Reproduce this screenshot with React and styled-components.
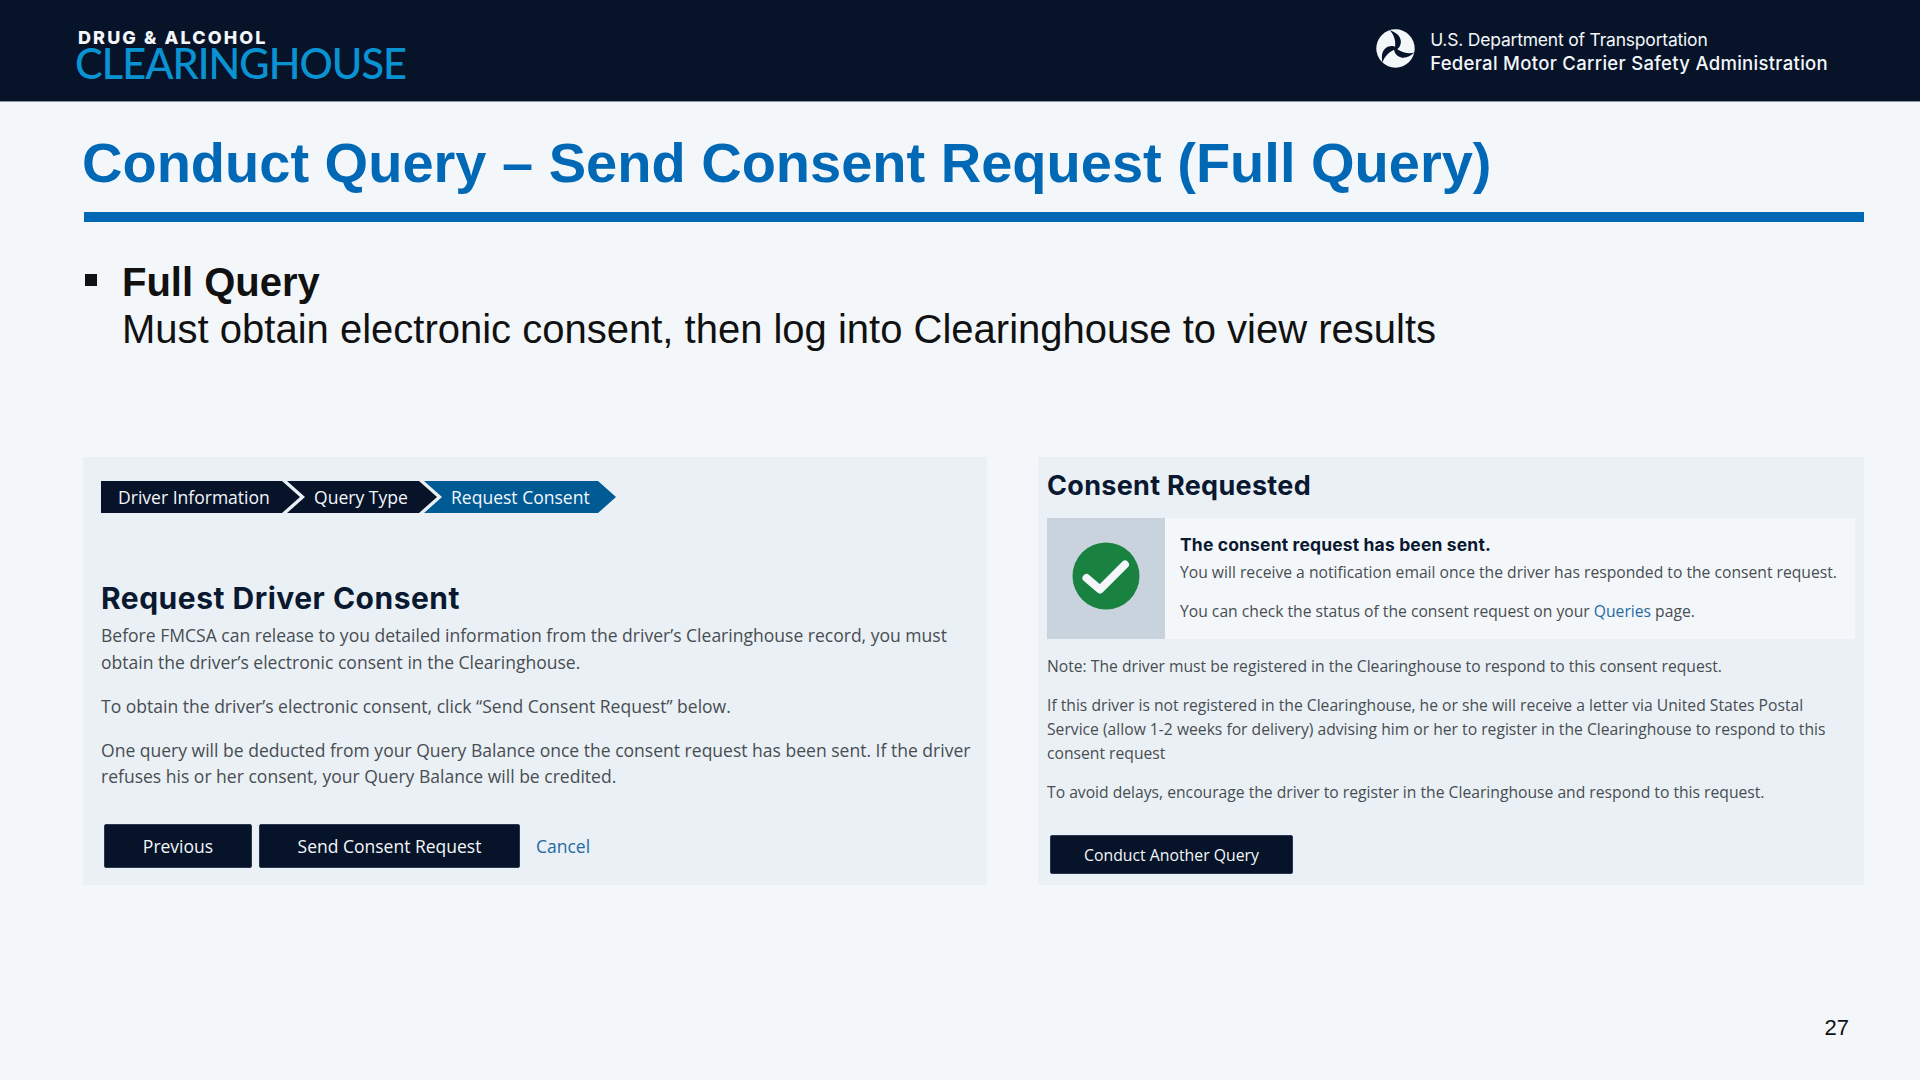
import React from "react";
import styled, { createGlobalStyle } from "styled-components";

const Global = createGlobalStyle`
  html, body { margin: 0; padding: 0; background: #f3f7fa; }
  * { box-sizing: border-box; }
`;
const Slide = styled.div`
  width: 1920px; height: 1080px; display: flex; flex-direction: column;
  background: #f3f7fa; font-family: "Liberation Sans", Arial, sans-serif; overflow: hidden;
`;
const Header = styled.header`
  height: 102px; flex: none; background: #071329; display: flex; align-items: center;
  justify-content: space-between; padding: 0 92px 0 76px; border-bottom: 1px solid #8a92a0;
`;
const Logo = styled.div`display: flex; flex-direction: column; align-items: flex-start; padding-top: 8px;`;
const LogoTop = styled.div`
  font: 800 18px/18px Inter, sans-serif; letter-spacing: 2.1px; color: #f3f7fa; margin-left: 2px;
`;
const LogoMain = styled.div`
  font: 500 41.5px/33px Lato, sans-serif; letter-spacing: -0.95px; color: #0a93d3; margin-left: -1px;
`;
const Agency = styled.div`display: flex; align-items: center; gap: 15px;`;
const DotSvg = styled.svg`flex: none; margin-bottom: 4px;`;
const AgencyText = styled.div`display: flex; flex-direction: column; gap: 3px; padding-top: 2px; color: #f3f7fa; font-family: Inter, sans-serif;`;
const AgencyLine = styled.div`
  font-size: ${p => (p.$strong ? 18.5 : 17.5)}px; line-height: 21px; font-weight: ${p => (p.$strong ? 500 : 400)};
  letter-spacing: ${p => (p.$strong ? "0.3px" : "-0.2px")}; white-space: nowrap;
`;
const Content = styled.main`flex: 1; display: flex; flex-direction: column; padding: 0 56px 0 82px;`;
const Title = styled.h1`
  margin: 0 0 0 2px; height: 120px; padding-top: 28px; font-size: 56px; line-height: 66px; font-weight: 700; color: #0068b5;
  border-bottom: 10px solid #0068b5; text-indent: -2px; white-space: nowrap;
`;
const Bullet = styled.div`
  display: flex; margin-top: 37px; padding-left: 3px; color: #111; font-size: 40px; line-height: 47px;
`;
const Square = styled.span`width: 12px; height: 12px; background: #111; margin: 15px 25px 0 0; flex: none;`;
const BulletBody = styled.div`display: flex; flex-direction: column;`;
const Strong = styled.div`font-weight: 700;`;
const Panels = styled.div`display: grid; grid-template-columns: 904px 826px; gap: 51px; margin: 104px 0 0 1px;`;
const Panel = styled.section`
  height: 428px; background: repeating-conic-gradient(#e6eef3 0 25%, #eef3f7 0 50%) 0 0 / 2px 2px;
  display: flex; flex-direction: column;
  padding: ${p => p.$pad}; font-family: "Open Sans", sans-serif; color: #484d52;
`;
const Steps = styled.div`display: flex; height: 32px; flex: none;`;
const Step = styled.div`
  height: 32px; width: ${p => p.$w}px; margin-left: ${p => (p.$first ? 0 : -13)}px;
  background: ${p => (p.$active ? "#005a94" : "#071329")}; color: #f3f7fa;
  font-size: 17.55px; line-height: 32px; padding-left: ${p => p.$pl}px; white-space: nowrap;
  clip-path: ${p => p.$first
    ? "polygon(0 0, calc(100% - 18px) 0, 100% 50%, calc(100% - 18px) 100%, 0 100%)"
    : "polygon(0 0, calc(100% - 18px) 0, 100% 50%, calc(100% - 18px) 100%, 0 100%, 18px 50%)"};
`;
const Heading = styled.h2`
  margin: ${p => p.$mt}px 0 0; font: 700 ${p => p.$size}px/36px Inter, sans-serif; color: #0a1830; letter-spacing: ${p => p.$ls}px; white-space: nowrap;
`;
const Para = styled.p`
  margin: ${p => p.$mt}px 0 0; font-size: ${p => p.$size}px; line-height: ${p => p.$lh}px; white-space: nowrap;
`;
const ButtonRow = styled.div`display: flex; align-items: center; margin-top: ${p => p.$mt}px; padding-left: 3px;`;
const Btn = styled.button`
  height: ${p => p.$h}px; width: ${p => p.$w}px; margin-right: ${p => p.$mr || 0}px; background: #071329; color: #f3f7fa;
  border: 1px solid #2a3550; border-radius: 2px; font-family: "Open Sans", sans-serif; font-size: ${p => p.$size}px; padding: 0;
`;
const Link = styled.a`color: #1f6aa5; text-decoration: none;`;
const CancelLink = styled(Link)`font-size: 17.5px; margin-left: 16px;`;
const Alert = styled.div`display: flex; height: 121px; width: 808px; background: #f3f7fa; margin-top: 14px; flex: none;`;
const AlertIcon = styled.div`width: 118px; background: #c9d3dd; display: flex; align-items: center; justify-content: center; flex: none; padding-bottom: 6px;`;
const AlertBody = styled.div`padding: 15px 0 0 15px;`;
const AlertTitle = styled.div`font: 700 17.5px/24px Inter, sans-serif; color: #0a1830; letter-spacing: 0.15px;`;
const Footer = styled.div`flex: 1; display: flex; justify-content: flex-end; align-items: flex-start; padding: 129px 15px 0 0; font-size: 22px; line-height: 28px; color: #111;`;

const DotLogo = () => (
  <DotSvg width="39" height="39" viewBox="0 0 40 40" aria-hidden="true">
    <circle cx="20" cy="20" r="19.7" fill="#f3f7fa" />
    {[0, 120, 240].map(r => (
      <path
        key={r}
        d="M14 1.2 C20 3 26 7 25.5 14 C25 18 23 20 20 22 C19 18 20.5 14 19 10 C18 6 16 3 14 1.2 Z"
        fill="#071329"
        transform={`rotate(${r} 20 20)`}
      />
    ))}
  </DotSvg>
);
const Check = () => (
  <svg width="68" height="68" viewBox="0 0 68 68" aria-hidden="true">
    <circle cx="34" cy="34" r="33.5" fill="#1a8240" />
    <path d="M14.5 36 L28 47.5 L53 22.5" fill="none" stroke="#f3f7fa" strokeWidth="8" strokeLinejoin="round" strokeLinecap="round" />
  </svg>
);

export default function App() {
  return (
    <Slide>
      <Global />
      <Header>
        <Logo>
          <LogoTop>DRUG &amp; ALCOHOL</LogoTop>
          <LogoMain>CLEARINGHOUSE</LogoMain>
        </Logo>
        <Agency>
          <DotLogo />
          <AgencyText>
            <AgencyLine>U.S. Department of Transportation</AgencyLine>
            <AgencyLine $strong>Federal Motor Carrier Safety Administration</AgencyLine>
          </AgencyText>
        </Agency>
      </Header>
      <Content>
        <Title>Conduct Query – Send Consent Request (Full Query)</Title>
        <Bullet>
          <Square />
          <BulletBody>
            <Strong>Full Query</Strong>
            <div>Must obtain electronic consent, then log into Clearinghouse to view results</div>
          </BulletBody>
        </Bullet>
        <Panels>
          <Panel $pad="24px 0 0 18px">
            <Steps>
              <Step $first $w={199} $pl={17}>Driver Information</Step>
              <Step $w={150} $pl={27}>Query Type</Step>
              <Step $active $w={192} $pl={27}>Request Consent</Step>
            </Steps>
            <Heading $mt={67} $size={30} $ls={0.5}>Request Driver Consent</Heading>
            <Para $mt={6} $size={17.55} $lh={26.5}>Before FMCSA can release to you detailed information from the driver’s Clearinghouse record, you must<br />obtain the driver’s electronic consent in the Clearinghouse.</Para>
            <Para $mt={18} $size={17.55} $lh={26.5}>To obtain the driver’s electronic consent, click “Send Consent Request” below.</Para>
            <Para $mt={17} $size={17.55} $lh={26.5}>One query will be deducted from your Query Balance once the consent request has been sent. If the driver<br />refuses his or her consent, your Query Balance will be credited.</Para>
            <ButtonRow $mt={34}>
              <Btn $w={148} $h={44} $mr={7} $size={17.5}>Previous</Btn>
              <Btn $w={261} $h={44} $size={17.5}>Send Consent Request</Btn>
              <CancelLink>Cancel</CancelLink>
            </ButtonRow>
          </Panel>
          <Panel $pad="11px 0 0 9px">
            <Heading $mt={0} $size={27} $ls={0.3}>Consent Requested</Heading>
            <Alert>
              <AlertIcon><Check /></AlertIcon>
              <AlertBody>
                <AlertTitle>The consent request has been sent.</AlertTitle>
                <Para $mt={3} $size={15.68} $lh={24}>You will receive a notification email once the driver has responded to the consent request.</Para>
                <Para $mt={15} $size={15.68} $lh={24}>You can check the status of the consent request on your <Link>Queries</Link> page.</Para>
              </AlertBody>
            </Alert>
            <Para $mt={15} $size={15.68} $lh={24}>Note: The driver must be registered in the Clearinghouse to respond to this consent request.</Para>
            <Para $mt={15} $size={15.68} $lh={24}>If this driver is not registered in the Clearinghouse, he or she will receive a letter via United States Postal<br />Service (allow 1-2 weeks for delivery) advising him or her to register in the Clearinghouse to respond to this<br />consent request</Para>
            <Para $mt={15} $size={15.68} $lh={24}>To avoid delays, encourage the driver to register in the Clearinghouse and respond to this request.</Para>
            <ButtonRow $mt={31}>
              <Btn $w={243} $h={39} $size={15.8}>Conduct Another Query</Btn>
            </ButtonRow>
          </Panel>
        </Panels>
        <Footer>27</Footer>
      </Content>
    </Slide>
  );
}
